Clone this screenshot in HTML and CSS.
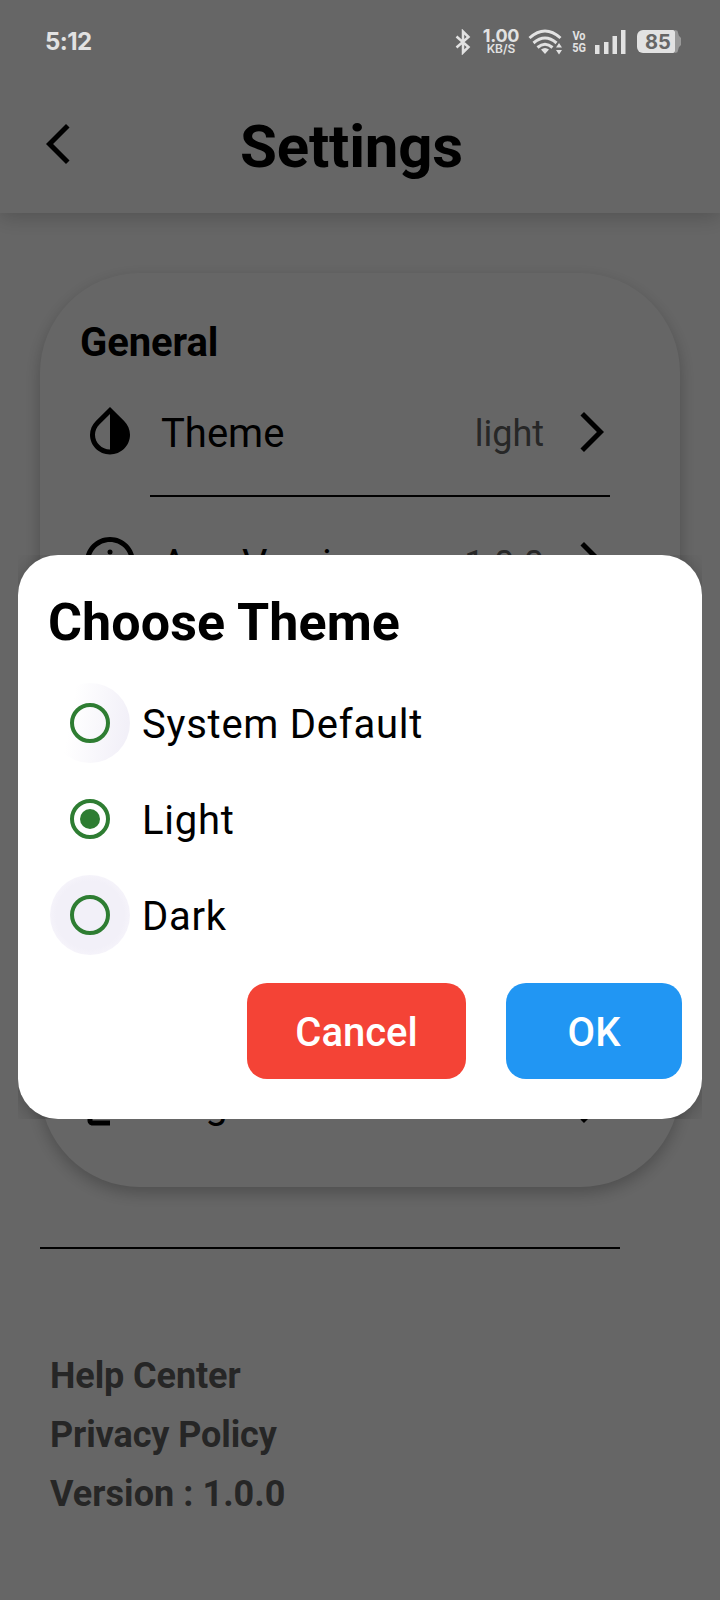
FILE: index.html
```html
<!DOCTYPE html>
<html lang="en">
<head>
<meta charset="utf-8">
<title>Settings</title>
<link rel="stylesheet" href="styles.css">
</head>
<body>
<svg width="0" height="0" class="defs">
  <symbol id="forward" viewBox="0 0 24 24"><path d="M6.23 20.23 8 22l10-10L8 2 6.23 3.77 14.46 12z"/></symbol>
</svg>
<div class="screen">
  <div class="status">
    <span class="clock">5:12</span>
    <div class="status-icons">
      <svg class="bluetooth" width="16" height="26" viewBox="0 0 16 26"><path d="M1.500 7.500 13.500 18 8 23.500V2.500L13.500 8 1.500 18.500" fill="none" stroke="currentColor" stroke-width="2.500"/></svg>
      <div class="stack speed"><span>1.00</span><span class="unit">KB/S</span></div>
      <svg class="wifi" width="36" height="26" viewBox="0 0 36 26">
        <g fill="none" stroke="currentColor" stroke-width="3">
          <path d="M1.500 9Q17 -5 32.500 9"/><path d="M5.500 14Q17 4 28.500 14"/><path d="M9.500 18.500Q17 12 24.500 18.500"/>
        </g>
        <path d="M13 20.500Q17 17.500 21 20.500L17 25ZM28 18.500l3-4.500 3 4.500ZM28 21h6L31 25.500Z"/>
      </svg>
      <div class="stack network"><span>Vo</span><span>5G</span></div>
      <svg class="signal" width="31" height="26" viewBox="0 0 31 26"><path d="M0 16h4.500v9H0ZM9 13h4.500v12H9ZM17.500 7h4.500v18h-4.500ZM26 1h4.500v24H26Z"/></svg>
      <div class="battery">85</div>
    </div>
  </div>

  <header class="header">
    <svg class="back" width="48" height="48" viewBox="0 0 24 24"><path d="M17.770 3.770 16 2 6 12l10 10 1.770-1.770L9.540 12z"/></svg>
    <h1 class="title">Settings</h1>
  </header>

  <main class="content">
    <section class="card">
      <div>
        <h2 class="section-title">General</h2>
        <div class="row">
          <svg width="60" height="60" viewBox="0 0 24 24"><path d="M12 4.810V19c-3.310 0-6-2.630-6-5.870 0-1.560.620-3.030 1.750-4.140L12 4.810M12 2 6.350 7.560C4.900 8.990 4 10.960 4 13.130 4 17.480 7.580 21 12 21s8-3.520 8-7.870c0-2.170-.9-4.140-2.350-5.570L12 2z"/></svg>
          <span class="label">Theme</span><span class="value">light</span>
          <svg width="48" height="48"><use href="#forward"/></svg>
        </div>
        <div class="divider"></div>
        <div class="row">
          <svg width="60" height="60" viewBox="0 0 24 24"><path d="M11 11h2v6h-2zm1-9C6.480 2 2 6.480 2 12s4.480 10 10 10 10-4.480 10-10S17.520 2 12 2zm0 18c-4.410 0-8-3.590-8-8s3.590-8 8-8 8 3.590 8 8-3.590 8-8 8z"/><circle cx="12" cy="8" r="1"/></svg>
          <span class="label">App Version</span><span class="value">1.0.0</span>
          <svg width="48" height="48"><use href="#forward"/></svg>
        </div>
      </div>
      <div class="row">
        <svg width="60" height="60" viewBox="0 0 24 24"><path d="m17 7-1.410 1.410L18.170 11H8v2h10.170l-2.580 2.580L17 17l5-5zM5 5h7V3H5c-1.100 0-2 .9-2 2v14c0 1.100.9 2 2 2h7v-2H5V5z"/></svg>
        <span class="label">Log Out</span>
        <svg width="48" height="48"><use href="#forward"/></svg>
      </div>
    </section>
    <div class="rule"></div>
    <footer class="links">
      <span>Help Center</span><span>Privacy Policy</span><span class="version">Version : 1.0.0</span>
    </footer>
  </main>

  <div class="scrim"></div>
  <div class="dialog-clip">
    <div class="dialog" role="dialog">
      <h2 class="dialog-title">Choose Theme</h2>
      <div class="option"><span class="halo halo-fading"><span class="radio"></span></span><span class="option-label">System Default</span></div>
      <div class="option"><span class="halo"><span class="radio radio-on"></span></span><span class="option-label">Light</span></div>
      <div class="option"><span class="halo halo-full"><span class="radio"></span></span><span class="option-label">Dark</span></div>
      <div class="actions">
        <button class="button cancel">Cancel</button>
        <button class="button ok">OK</button>
      </div>
    </div>
  </div>
</div>
</body>
</html>
```
FILE: styles.css
```css
* { box-sizing: border-box; }
body { margin: 0; font-family: Roboto, sans-serif; color: #000; }
h1, h2 { margin: 0; }
svg { display: block; flex: none; fill: currentColor; }
.defs { position: absolute; }
.screen { position: relative; width: 720px; height: 1600px; overflow: hidden; background: #fff; display: flex; flex-direction: column; }

.status { position: absolute; z-index: 3; top: 0; left: 0; width: 720px; padding: 26px 41px 0 45px; display: flex; justify-content: space-between; color: #e2e2e2; }
.clock { font: 700 24px/32px Inter, sans-serif; letter-spacing: -0.6px; }
.status-icons { display: flex; align-items: flex-start; padding-top: 3px; font-family: Inter, sans-serif; }
.stack { display: flex; flex-direction: column; align-items: center; font-weight: 700; white-space: nowrap; }
.speed { width: 38px; margin: -1px 0 0 11px; font-size: 18px; line-height: 15px; letter-spacing: -0.3px; }
.unit { font-size: 12px; line-height: 12px; letter-spacing: 0; font-weight: 600; }
.wifi { margin-left: 8px; }
.network { width: 16px; margin: 1px 0 0 7px; font: 700 13px/12px Roboto, sans-serif; transform: scaleX(.84); }
.signal { margin-left: 8px; }
.battery { position: relative; width: 38px; height: 23px; margin: 1px 4px 0 11px; border-radius: 6px 2px 2px 6px; background: #e2e2e2; color: #666; font-size: 20px; line-height: 24px; font-weight: 700; text-align: center; padding-left: 4px; }
.battery::after { content: ""; position: absolute; left: 38px; top: 0; width: 6px; height: 23px; background: #999; clip-path: polygon(0 0, 40% 3%, 65% 25%, 100% 35%, 100% 65%, 65% 75%, 40% 97%, 0 100%); }

.header { flex: none; height: 213px; padding: 78px 0 0 34px; display: flex; align-items: center; box-shadow: 0 4px 20px rgba(0,0,0,.2); }
.back { margin-top: -4px; }
.title { margin: 3px 0 0 158px; font-size: 60px; line-height: 70px; font-weight: 700; letter-spacing: -0.2px; }

.content { display: flex; flex-direction: column; padding: 60px 40px 0; }
.card { height: 914px; padding: 42px 40px 21px; border-radius: 100px; display: flex; flex-direction: column; justify-content: space-between; box-shadow: 0 6px 16px rgba(0,0,0,.24); }
.section-title { font-size: 40px; line-height: 55px; font-weight: 700; letter-spacing: -0.1px; margin-bottom: -3px; }
.row { height: 128px; display: flex; align-items: center; padding-right: 24px; font-size: 40px; }
.row svg { margin-top: 1px; }
.label { flex: 1; margin-left: 21px; padding-top: 5px; letter-spacing: 0; }
.divider + .row .label { padding-top: 7px; }
.value { margin-right: 24px; padding-top: 6px; font-size: 36px; color: #616161; }
.divider { height: 2px; margin: 0 30px 0 70px; background: #000; }
.rule { width: 580px; height: 2px; margin-top: 60px; background: #000; }
.links { display: flex; flex-direction: column; margin: 98px 0 0 10px; font-size: 36px; line-height: 59px; font-weight: 700; letter-spacing: -0.1px; color: #5f5f5f; }
.version { letter-spacing: 0.05px; }

.scrim { position: absolute; inset: 0; background: rgba(0,0,0,.6); }
.dialog-clip { position: absolute; z-index: 2; left: 18px; top: 555px; width: 684px; height: 564px; overflow: hidden; }
.dialog { height: 564px; padding: 36px 20px 40px 30px; border-radius: 40px; background: #fff; box-shadow: 0 4px 20px rgba(0,0,0,.25); }
.dialog-title { font-size: 52px; line-height: 64px; font-weight: 700; letter-spacing: 0.1px; }
.dialog-title + .option { margin-top: 20px; }
.option { height: 96px; display: flex; align-items: center; font-size: 40px; letter-spacing: 0.75px; }
.option-label { padding-top: 3px; }
.halo { width: 80px; height: 80px; margin: 0 12px 0 2px; border-radius: 50%; display: grid; place-items: center; }
.halo-full { background: radial-gradient(circle, #f2f0f8 60%, #f5f3fa 70%); }
.halo-fading { background: linear-gradient(100deg, #fff 28%, #f2f0f8 90%); }
.radio { width: 40px; height: 40px; border: 4px solid #2e7d32; border-radius: 50%; display: grid; place-items: center; }
.radio-on::after { content: ""; width: 20px; height: 20px; border-radius: 50%; background: #2e7d32; }
.actions { display: flex; justify-content: flex-end; gap: 40px; margin-top: 20px; }
.button { height: 96px; border: 0; border-radius: 20px; padding: 3px 0 0; color: #fff; font: 500 40px Roboto, sans-serif; letter-spacing: 0; }
.cancel { width: 219px; background: #f44336; }
.ok { width: 176px; background: #2196f3; }
```
